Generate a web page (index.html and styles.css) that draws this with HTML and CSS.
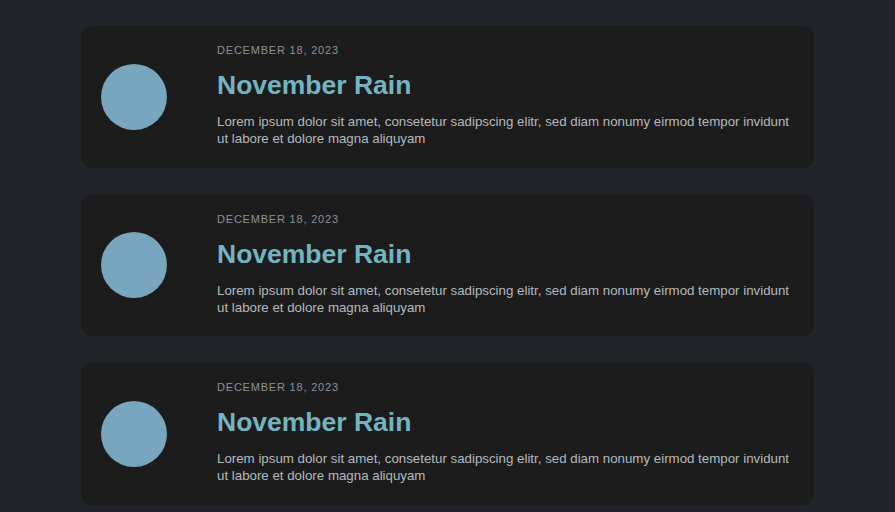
FILE: index.html
```html
<!DOCTYPE html>
<html>
<head>
<meta charset="utf-8">
<link rel="stylesheet" href="styles.css">
</head>
<body>
<main class="list">
  <article class="card">
    <div class="avatar"></div>
    <div class="content">
      <div class="date">December 18, 2023</div>
      <h2 class="title">November Rain</h2>
      <p class="text">Lorem ipsum dolor sit amet, consetetur sadipscing elitr, sed diam nonumy eirmod tempor invidunt ut labore et dolore magna aliquyam</p>
    </div>
  </article>
  <article class="card">
    <div class="avatar"></div>
    <div class="content">
      <div class="date">December 18, 2023</div>
      <h2 class="title">November Rain</h2>
      <p class="text">Lorem ipsum dolor sit amet, consetetur sadipscing elitr, sed diam nonumy eirmod tempor invidunt ut labore et dolore magna aliquyam</p>
    </div>
  </article>
  <article class="card">
    <div class="avatar"></div>
    <div class="content">
      <div class="date">December 18, 2023</div>
      <h2 class="title">November Rain</h2>
      <p class="text">Lorem ipsum dolor sit amet, consetetur sadipscing elitr, sed diam nonumy eirmod tempor invidunt ut labore et dolore magna aliquyam</p>
    </div>
  </article>
</main>
</body>
</html>
```
FILE: styles.css
```css
html, body {
  margin: 0;
  padding: 0;
  background: #212529;
  font-family: "Liberation Sans", Arial, sans-serif;
}
.list {
  width: 733px;
  margin: 0 auto;
  padding-top: 26px;
  display: flex;
  flex-direction: column;
  gap: 27px;
}
.card {
  background: #1c1c1c;
  border-radius: 10px;
  height: 141.5px;
  box-sizing: border-box;
  display: flex;
  align-items: center;
  padding: 0 20px 0 20px;
}
.avatar {
  width: 66px;
  height: 66px;
  border-radius: 50%;
  background: #78a6bf;
  flex: none;
  margin-right: 50px;
}
.content {
  flex: 1;
  min-width: 0;
  align-self: flex-start;
  padding-top: 18px;
}
.date {
  font-size: 11px;
  letter-spacing: 0.8px;
  text-transform: uppercase;
  color: #8b9397;
  line-height: 13px;
}
.title {
  margin: 12px 0 0;
  font-size: 26.5px;
  font-weight: bold;
  color: #74b4c0;
  line-height: 32px;
}
.text {
  margin: 12px 0 0;
  font-size: 13.3px;
  line-height: 17px;
  color: #b3babf;
}
```
